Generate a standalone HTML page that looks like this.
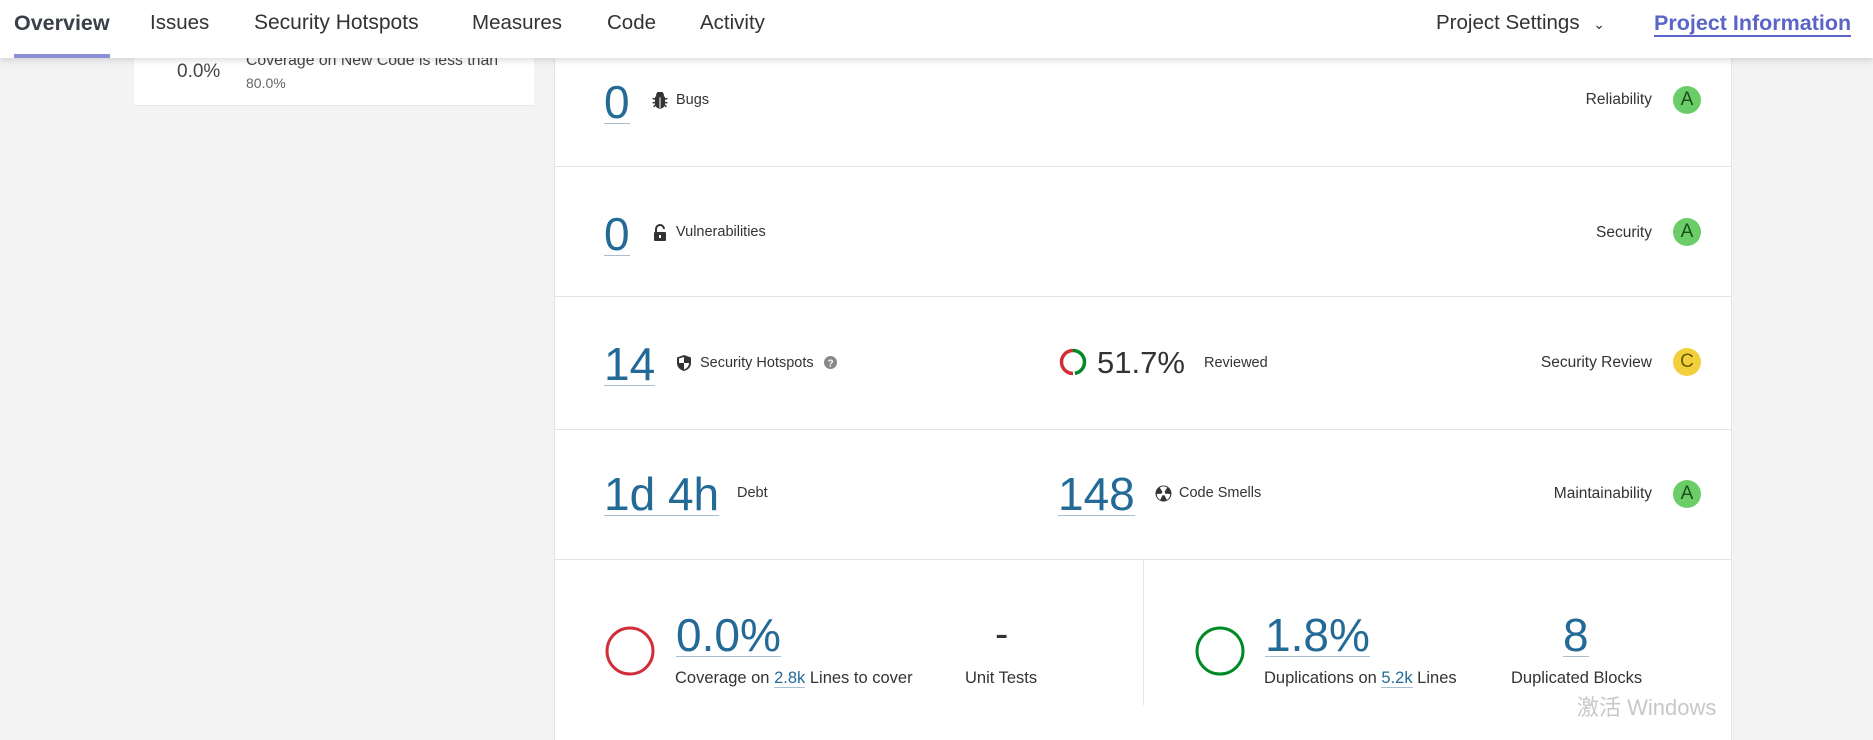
<!DOCTYPE html>
<html><head><meta charset="utf-8"><style>
*{margin:0;padding:0;box-sizing:border-box}
body{width:1873px;height:705px;background:#f3f3f3;font-family:"Liberation Sans",Arial,sans-serif;position:relative;overflow:hidden;color:#333}
.a{position:absolute;white-space:nowrap}
.nav{position:absolute;left:0;top:0;width:1873px;height:58px;background:#fff;box-shadow:0 3px 6px rgba(0,0,0,.12);z-index:5}
.nav .a{font-size:20.5px;color:#333;top:11px}
.main{position:absolute;left:554px;top:40px;width:1178px;height:700px;background:#fff;border-left:1px solid #e4e4e4;border-right:1px solid #e4e4e4}
.sep{position:absolute;left:554px;width:1178px;height:1px;background:#e4e4e4}
.num{font-size:46px;color:#236a97;line-height:0.9;border-bottom:1px solid #a7bfd0;padding-bottom:0}
.lbl{font-size:14.5px;color:#333}
.bl{font-size:16.5px;color:#333}
.rt{position:absolute;width:28px;height:28px;border-radius:50%;font-size:19px;text-align:center;line-height:28px;color:#1b4d1b}
.rl{font-size:15.5px;color:#333;right:221px}
.lk{color:#236a97;border-bottom:1px solid #a7bfd0}
</style></head><body>
<div class="nav">
 <div class="a" style="left:14px;font-weight:bold;color:#3b3f4a;font-size:21.5px">Overview</div>
 <div style="position:absolute;left:14px;top:54px;width:96px;height:4px;background:#8a8fd6"></div>
 <div class="a" style="left:150px">Issues</div>
 <div class="a" style="left:254px;font-size:21px">Security Hotspots</div>
 <div class="a" style="left:472px">Measures</div>
 <div class="a" style="left:607px">Code</div>
 <div class="a" style="left:700px">Activity</div>
 <div class="a" style="left:1436px">Project Settings <span style="font-size:14px;margin-left:8px">&#8964;</span></div>
 <div class="a" style="left:1654px;color:#5b65c7;font-weight:bold;font-size:21.5px;border-bottom:2px solid #5b65c7;line-height:24px">Project Information</div>
</div>
<div style="position:absolute;left:134px;top:40px;width:400px;height:66px;background:#fff;border-bottom:1px solid #e6e6e6"></div>
<div class="a" style="left:177px;top:61px;font-size:19px;color:#444">0.0%</div>
<div class="a" style="left:246px;top:52px;font-size:15.8px;color:#444">Coverage on New Code is less than</div>
<div class="a" style="left:246px;top:75px;font-size:14px;color:#666">80.0%</div>

<div class="main"></div>
<div class="sep" style="top:166px"></div>
<div class="sep" style="top:296px"></div>
<div class="sep" style="top:429px"></div>
<div class="sep" style="top:559px"></div>
<div style="position:absolute;left:1143px;top:559px;width:1px;height:146px;background:#e4e4e4"></div>

<!-- row1 -->
<div class="a num" style="left:604px;top:82px">0</div>
<svg class="a" style="left:651px;top:92px" width="18" height="17" viewBox="0 0 16 16"><path fill="#333" d="M5 3a3 3 0 0 1 6 0v1H5zM4 5h8v6a4 4 0 0 1-8 0zM1 6l3 1M15 6l-3 1M1 10h3M15 10h-3M2 14l2-2M14 14l-2-2" stroke="#333" stroke-width="1.4"/><path d="M8 5v10" stroke="#fff" stroke-width="1"/></svg>
<div class="a lbl" style="left:676px;top:92px">Bugs</div>
<div class="a rl" style="top:91px">Reliability</div>
<div class="rt" style="left:1673px;top:86px;background:#6bcd68">A</div>
<!-- row2 -->
<div class="a num" style="left:604px;top:214px">0</div>
<svg class="a" style="left:653px;top:224px" width="14" height="17" viewBox="0 0 14 17"><path d="M3 8V5a4 4 0 0 1 8 0" fill="none" stroke="#333" stroke-width="2"/><rect x="1" y="8" width="12" height="9" rx="1" fill="#333"/><rect x="6" y="11" width="2" height="3" fill="#fff"/></svg>
<div class="a lbl" style="left:676px;top:224px">Vulnerabilities</div>
<div class="a rl" style="top:224px">Security</div>
<div class="rt" style="left:1673px;top:218px;background:#6bcd68">A</div>
<!-- row3 -->
<div class="a num" style="left:604px;top:344px">14</div>
<svg class="a" style="left:676px;top:354px" width="16" height="18" viewBox="0 0 16 18"><path d="M8 1L1 3.5V9c0 4 3 7 7 8 4-1 7-4 7-8V3.5z" fill="#333"/><path d="M8 3v6H3V4.5zM8 9h5c0 3-2 5.5-5 6.5z" fill="#fff"/></svg>
<div class="a lbl" style="left:700px;top:355px">Security Hotspots</div>
<svg class="a" style="left:824px;top:356px" width="13" height="13" viewBox="0 0 13 13"><circle cx="6.5" cy="6.5" r="6.5" fill="#888"/><text x="6.5" y="10.5" font-size="10" font-weight="bold" fill="#fff" text-anchor="middle" font-family="Liberation Sans">?</text></svg>
<svg class="a" style="left:1058px;top:347px" width="30" height="30" viewBox="0 0 30 30"><path d="M15 3.5A11.5 11.5 0 0 0 15 26.5" fill="none" stroke="#d02f3a" stroke-width="3.5"/><path d="M15 3.5A11.5 11.5 0 0 1 15 26.5" fill="none" stroke="#008a25" stroke-width="3.5" stroke-dasharray="34 3"/></svg>
<div class="a" style="left:1097px;top:345px;font-size:31px;color:#333">51.7%</div>
<div class="a lbl" style="left:1204px;top:355px">Reviewed</div>
<div class="a rl" style="top:354px">Security Review</div>
<div class="rt" style="left:1673px;top:348px;background:#f2d03b;color:#6b5a00">C</div>
<!-- row4 -->
<div class="a num" style="left:604px;top:474px">1d 4h</div>
<div class="a lbl" style="left:737px;top:485px">Debt</div>
<div class="a num" style="left:1058px;top:474px">148</div>
<svg class="a" style="left:1155px;top:485px" width="17" height="17" viewBox="0 0 16 16"><circle cx="8" cy="8" r="7.5" fill="#333"/><circle cx="8" cy="8" r="1.6" fill="#fff"/><path d="M8 8L4.5 2.5A6.3 6.3 0 0 1 11.5 2.5zM8 8l6.3.5a6.3 6.3 0 0 1-3.2 5.5zM8 8L4.9 14A6.3 6.3 0 0 1 1.7 8.5z" fill="#fff"/></svg>
<div class="a lbl" style="left:1179px;top:485px">Code Smells</div>
<div class="a rl" style="top:485px">Maintainability</div>
<div class="rt" style="left:1673px;top:480px;background:#6bcd68">A</div>
<!-- bottom -->
<svg class="a" style="left:604px;top:625px" width="52" height="52"><circle cx="26" cy="26" r="23" fill="none" stroke="#d02f3a" stroke-width="3"/></svg>
<div class="a num" style="left:676px;top:615px">0.0%</div>
<div class="a bl" style="left:675px;top:669px">Coverage on <span class="lk">2.8k</span> Lines to cover</div>
<div class="a" style="left:995px;top:612px;font-size:40px;color:#333">-</div>
<div class="a bl" style="left:965px;top:669px">Unit Tests</div>
<svg class="a" style="left:1194px;top:625px" width="52" height="52"><circle cx="26" cy="26" r="23" fill="none" stroke="#008a25" stroke-width="3"/></svg>
<div class="a num" style="left:1265px;top:615px">1.8%</div>
<div class="a bl" style="left:1264px;top:669px">Duplications on <span class="lk">5.2k</span> Lines</div>
<div class="a num" style="left:1563px;top:615px">8</div>
<div class="a bl" style="left:1511px;top:669px">Duplicated Blocks</div>
<div class="a" style="left:1577px;top:690px;font-size:22px;color:#c8c8c8;font-family:'Liberation Sans','Noto Sans CJK SC',sans-serif">激活 Windows</div>
</body></html>
